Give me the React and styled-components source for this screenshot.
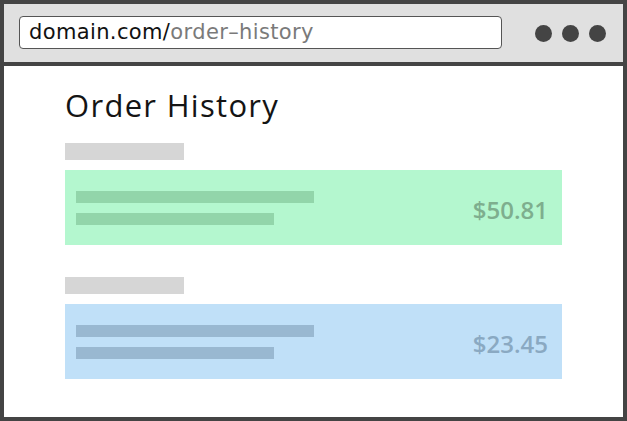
import React from "react";
import styled, { createGlobalStyle } from "styled-components";

const Global = createGlobalStyle`
  html, body { margin: 0; padding: 0; background: #fff; }
  * { box-sizing: border-box; }
`;

const Frame = styled.div`
  width: 627px;
  height: 421px;
  border: 4px solid #444444;
  background: #ffffff;
  display: flex;
  flex-direction: column;
  overflow: hidden;
`;

const Toolbar = styled.div`
  height: 62px;
  flex: none;
  background: #e0e0e0;
  border-bottom: 4px solid #444444;
  display: flex;
  align-items: flex-start;
  padding: 12px 17px 0 15px;
`;

const AddressBar = styled.div`
  width: 483px;
  height: 33px;
  background: #ffffff;
  border: 1px solid #555555;
  border-radius: 4px;
  display: flex;
  align-items: center;
  padding: 0 0 0 9px;
  font-family: "DejaVu Sans", "Open Sans", sans-serif;
  font-size: 21px;
  line-height: 1;
  letter-spacing: 0.37px;
  white-space: nowrap;
`;

const Domain = styled.span`
  color: #111111;
`;

const Path = styled.span`
  color: #7a7a7a;
`;

const Dots = styled.div`
  margin-left: auto;
  margin-top: 9px;
  display: flex;
  gap: 10px;
`;

const Dot = styled.span`
  width: 17px;
  height: 17px;
  border-radius: 50%;
  background: #444444;
`;

const Content = styled.main`
  padding: 21px 61px 0 61px;
  display: flex;
  flex-direction: column;
  font-family: "Open Sans", sans-serif;
`;

const Title = styled.h1`
  margin: 0 0 19px;
  font-size: 31px;
  line-height: 37px;
  font-weight: 400;
  letter-spacing: 1.3px;
  color: #141414;
`;

const Group = styled.section`
  display: flex;
  flex-direction: column;
  gap: 10px;
  & + & { margin-top: 32px; }
`;

const Label = styled.div`
  width: 119px;
  height: 17px;
  background: #d6d6d6;
`;

const Card = styled.div`
  width: 497px;
  height: 75px;
  background: ${(p) => p.$bg};
  display: flex;
  align-items: center;
  padding: 0 14px 0 11px;
`;

const Lines = styled.div`
  display: flex;
  flex-direction: column;
  gap: 10px;
`;

const Line = styled.div`
  height: 12px;
  width: ${(p) => p.$w}px;
  background: ${(p) => p.$c};
`;

const Price = styled.div`
  margin-left: auto;
  font-size: 24px;
  font-weight: 600;
  color: ${(p) => p.$c};
  line-height: 1;
  padding-top: 4px;
`;

const orders = [
  { bg: "#b4f7cf", line: "#92d5aa", price: "#7eae8e", amount: "$50.81" },
  { bg: "#c0e0f8", line: "#99b8d1", price: "#8aa9c2", amount: "$23.45" },
];

export default function App() {
  return (
    <>
      <Global />
      <Frame>
        <Toolbar>
          <AddressBar>
            <Domain>domain.com/</Domain>
            <Path>order–history</Path>
          </AddressBar>
          <Dots>
            <Dot />
            <Dot />
            <Dot />
          </Dots>
        </Toolbar>
        <Content>
          <Title>Order History</Title>
          {orders.map((o) => (
            <Group key={o.amount}>
              <Label />
              <Card $bg={o.bg}>
                <Lines>
                  <Line $w={238} $c={o.line} />
                  <Line $w={198} $c={o.line} />
                </Lines>
                <Price $c={o.price}>{o.amount}</Price>
              </Card>
            </Group>
          ))}
        </Content>
      </Frame>
    </>
  );
}
